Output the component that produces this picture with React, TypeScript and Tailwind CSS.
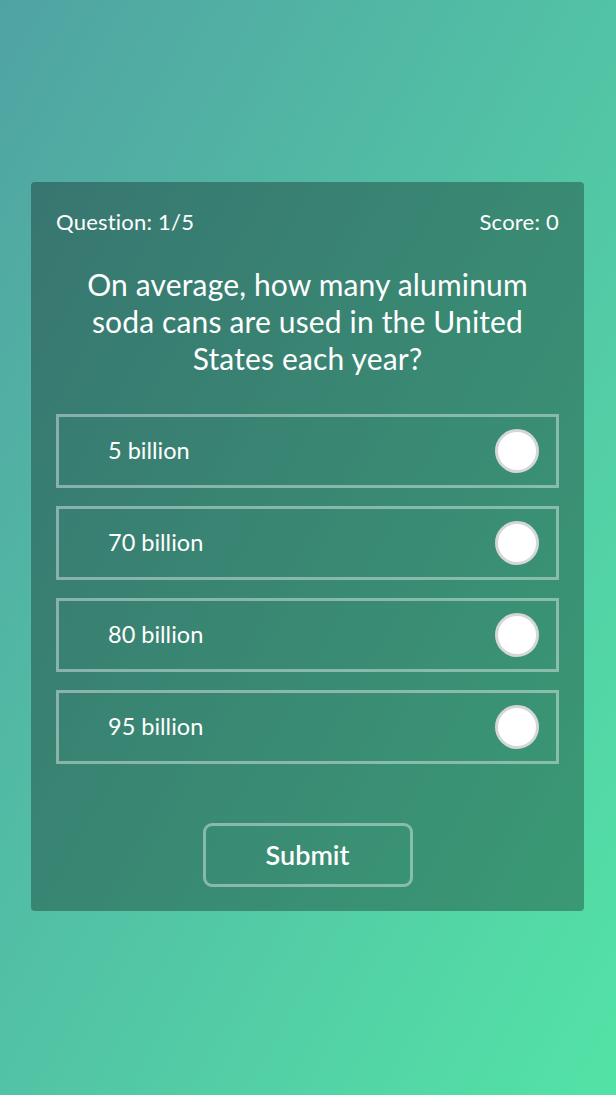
const options = ["5 billion", "70 billion", "80 billion", "95 billion"];

export default function App() {
  return (
    <div className="min-h-[1095px] w-full bg-gradient-to-br from-[#50a3a2] to-[#53e3a6] pt-[182px] font-['Lato','Liberation_Sans',sans-serif] text-white">
      <div className="ml-[31px] w-[553px] rounded-[4px] bg-black/30 px-[25px] pt-[26px] pb-[24px]">
        {/* header */}
        <div className="flex items-center justify-between text-[22px] leading-[28px] tracking-[0.01em]">
          <span>Question: 1/5</span>
          <span>Score: 0</span>
        </div>
        {/* question */}
        <p className="mt-[30px] px-[10px] text-center text-[30px] leading-[37px] tracking-[0.005em]">
          On average, how many aluminum soda cans are used in the United States each year?
        </p>
        {/* options */}
        <div className="mt-[37px] flex flex-col gap-[18px]">
          {options.map((o) => (
            <label
              key={o}
              className="flex h-[74px] items-center justify-between border-[3px] border-white/40 pl-[49px] pr-[17px] text-[23.5px]"
            >
              <span>{o}</span>
              <span className="h-[44px] w-[44px] rounded-full border-[3px] border-[#d4d6d9] bg-white"></span>
            </label>
          ))}
        </div>
        <div className="mt-[59px] flex justify-center">
          <button className="h-[64px] w-[210px] rounded-[9px] border-[3px] border-white/40 text-[27px] font-semibold">
            Submit
          </button>
        </div>
      </div>
    </div>
  );
}
